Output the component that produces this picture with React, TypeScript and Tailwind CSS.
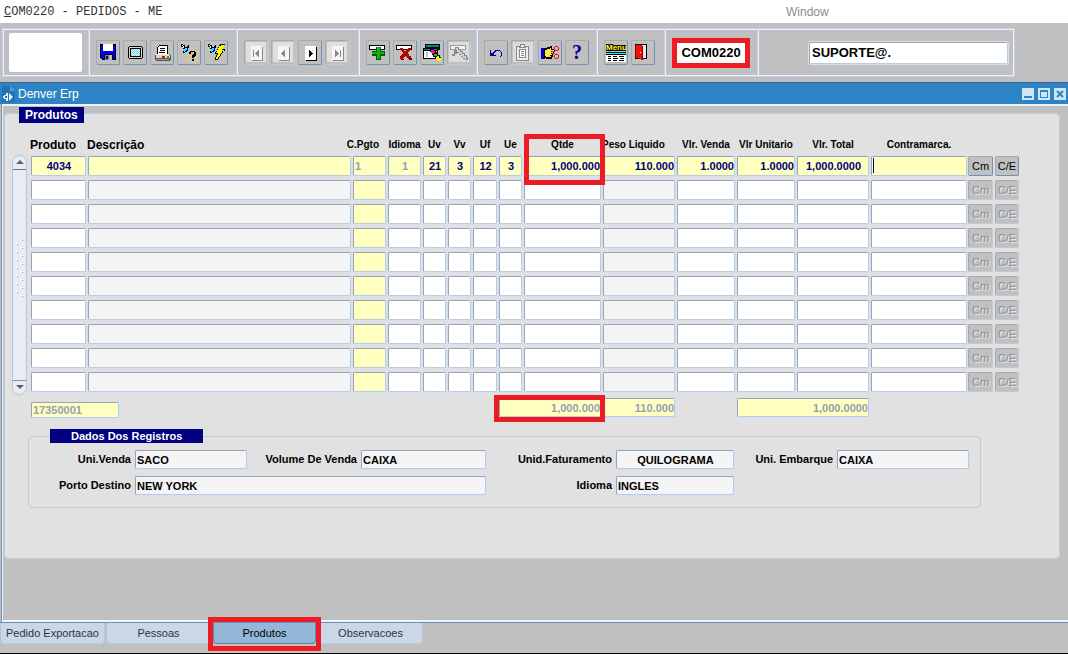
import type { ReactNode } from 'react'
import clsx from 'clsx'

const bevel = 'border border-t-[#9ea4ae] border-l-[#9ea4ae] border-r-[#b8cce4] border-b-[#b8cce4]'
const field = clsx(bevel, 'block w-full rounded-[2px] outline-none ring-1 ring-[#d6e0ee] font-bold text-[11px]')
const redFrame = 'pointer-events-none absolute z-10 border-5 border-[#ed1c24]'

type Column = {
  key: string
  label: string
  width: string
  head?: string
  align?: string
  empty?: string
  text?: string
  value?: string
}

const columns: Column[] = [
  { key: 'produto', label: 'Produto', width: 'w-[57px]', head: 'text-left text-[12px]', align: 'text-center', value: '4034' },
  { key: 'descricao', label: 'Descrição', width: '', head: 'text-left text-[12px]', empty: 'bg-[#f4f4f4]' },
  { key: 'cpgto', label: 'C.Pgto', width: 'w-[35px]', head: 'flex justify-end pr-2', empty: 'bg-[#ffffc0]', text: 'text-[#94a0b4]', value: '1' },
  { key: 'idioma', label: 'Idioma', width: 'w-[35px]', align: 'text-center', text: 'text-[#94a0b4]', value: '1' },
  { key: 'uv', label: 'Uv', width: 'w-[25px]', align: 'text-center', value: '21' },
  { key: 'vv', label: 'Vv', width: 'w-[25px]', align: 'text-center', value: '3' },
  { key: 'uf', label: 'Uf', width: 'w-[26px]', align: 'text-center', value: '12' },
  { key: 'ue', label: 'Ue', width: 'w-[25px]', align: 'text-center', value: '3' },
  { key: 'qtde', label: 'Qtde', width: 'w-[79px]', align: 'text-right', value: '1,000.000' },
  { key: 'peso', label: 'Peso Liquido', width: 'w-[74px]', head: 'text-left', align: 'text-right', empty: 'bg-[#f4f4f4]', value: '110.000' },
  { key: 'venda', label: 'Vlr. Venda', width: 'w-[60px]', align: 'text-right', value: '1.0000' },
  { key: 'unitario', label: 'Vlr Unitario', width: 'w-[60px]', align: 'text-right', value: '1.0000' },
  { key: 'total', label: 'Vlr. Total', width: 'w-[74px]', align: 'text-center', value: '1,000.0000' },
  { key: 'contramarca', label: 'Contramarca.', width: 'w-[98px]' },
]

const rows = Array.from({ length: 10 }, (_, i) => i)
const gripDots = Array.from({ length: 15 }, (_, i) => i)

function Icon({ children }: { children: ReactNode }) {
  return (
    <svg width="20" height="20" viewBox="0 0 20 20" shapeRendering="crispEdges" aria-hidden="true">
      {children}
    </svg>
  )
}

function SaveIcon() {
  return (
    <Icon>
      <path d="M2 2h16v16H4l-2-2z" fill="#000" />
      <path d="M3 3h14v14H4l-1-1z" fill="#0000f5" />
      <path d="M5 2h10v7H5z" fill="#fff" />
      <path d="M15 3h1v2h-1z" fill="#000" />
      <path d="M6 12h9v6H6z" fill="#000" />
      <path d="M7 13h7v5H7z" fill="#808080" />
      <path d="M11 13h3v5h-3z" fill="#c0c0c0" />
      <path d="M8 14h2v3H8z" fill="#0000a0" />
    </Icon>
  )
}

function ScreenIcon() {
  return (
    <Icon>
      <path d="M4 4h13v1h1v11h-1v1H4v-1H3V5h1z" fill="#000" />
      <path d="M4 5h13v11H4z" fill="#d8d4cc" />
      <path d="M5 6h11v9H5z" fill="#000" />
      <path d="M6 7h9v7H6z" fill="#fff" />
      <path
        d="M6 7.5h9M7 8.5h8M6 9.5h9M7 10.5h8M6 11.5h9M7 12.5h8M6 13.5h9"
        stroke="#5fd6dc"
        strokeDasharray="1 1"
      />
    </Icon>
  )
}

function PrintIcon() {
  return (
    <Icon>
      <path d="M7 3h9v9H5V5z" fill="#000" />
      <path d="M7 4h8v8H6V6z" fill="#fff" />
      <path d="M8 6h5v1H8zM8 8h5v1H8zM7 10h6v1H7z" fill="#000" />
      <path d="M4 12h14v1h1v5h-1v1H4v-1H3v-5h1z" fill="#555" />
      <path d="M3 12h14v1H3z" fill="#eee" />
      <path d="M4 13h14v3H4z" fill="#d8d8d8" />
      <path d="M4 17h13v1H4z" fill="#a0a0a0" />
      <path d="M10 14h3v2h-3z" fill="#f00" />
      <path d="M13 14h2v2h-2z" fill="#ff0" />
      <path d="M15 14h2v2h-2z" fill="#0b0" />
    </Icon>
  )
}

function Torch() {
  return (
    <>
      <path d="M2 2h2v1h2v2h2V4h1V3h1v3h-1v3H8v1H6v1H4V9h1V7H4V5H2z" fill="#000" />
      <path d="M3 3h1v1H3zM4 4h1v2H4z" fill="#fff" />
      <path d="M5 7h1V6h2v2H7v1H6v1H5z" fill="#0ff" />
      <path d="M8 5h1v3H8v1H7V8h1z" fill="#00f" />
      <path d="M6 9h2v1H6z" fill="#0000a0" />
    </>
  )
}

function EnterQueryIcon() {
  return (
    <Icon>
      <path
        d="M8 11.5h11M8 13.5h11M8 15.5h11M8 17.5h11M8 19.5h11M12 9.5h7"
        stroke="#f5e23c"
        strokeDasharray="1 1"
      />
      <Torch />
      <path d="M11 9h5v1h1v4h-1v1h-1v1h-2v-3h1v-1h1v-2h-3v2h-2v-2h1zM13 17h2v2h-2z" fill="#000" />
    </Icon>
  )
}

function RunQueryIcon() {
  return (
    <Icon>
      <Torch />
      <path d="M14 2h5v1h-1v2h-1v2h2v2h-2v2h-1v1h-1v2h-1v1h-1v2h-1v1H9v-3h1v-2h1v-1H9v-2h1V9h1V7h1V5h1V3h1z" fill="#000" />
      <path d="M15 3h3v2h-1v2h-1v1h2v1h-2v2h-1v1h-1v2h-1v1h-1v2h-2v-2h1v-2h1v-2h-2v-1h1V8h1V6h1V4h1z" fill="#ff0" />
    </Icon>
  )
}

function NavIcon({ glyph, active }: { glyph: string; active?: boolean }) {
  return (
    <Icon>
      {!active && <path d="M0 0h20v20H0z" fill="#e0e0e0" />}
      <path d="M6 5h11v14H6z" fill={active ? '#000' : '#888'} />
      <path d="M5 4h11v14H5z" fill={active ? '#fff' : '#f6f6f6'} />
      <path d={glyph} fill={active ? '#000' : '#888'} />
    </Icon>
  )
}

const record = (
  <>
    <path d="M1 3h16v5H1z" fill="#000" />
    <path d="M2 4h14v3H2z" fill="#fff" />
  </>
)

function InsertIcon() {
  return (
    <Icon>
      {record}
      <path d="M8 5h5v4h4v5h-4v4H8v-4H4V9h4z" fill="#006000" />
      <path d="M9 5h3v5h4v2h-4v5H9v-5H4v-2h5z" fill="#12b312" />
    </Icon>
  )
}

function RemoveIcon() {
  return (
    <Icon>
      {record}
      <path d="M5 6h3v2h1v1h2V8h1V7h1V6h3v2h-1v1h-1v1h-1v2h1v2h2v3h-3v-1h-1v-1h-1v-1h-1v1H9v1H8v1H5v-3h1v-1h1v-1h1v-2H7V9H6V8H5z" fill="#b80000" />
      <path d="M14 16h3v2h-3zM6 17h3v1H6z" fill="#600" />
    </Icon>
  )
}

function ClearIcon() {
  return (
    <Icon>
      <path d="M3 2h15v6H3z" fill="#000" />
      <path d="M4 3h13v2H4z" fill="#008b8b" />
      <path d="M1 6h15v11H1z" fill="#000" />
      <path d="M2 7h13v1H2z" fill="#008b8b" />
      <path d="M2 9h13v7H2z" fill="#fff" />
      <path d="M4 10h2v5H4z" fill="#c0c0c0" />
      <path d="M8 7h4v1h2v2h1v2h1v1h2v2h1v4h-3v-1h-2v-2h-1v-1h-2v-2h-1v-2H9v-1H8z" fill="#000" />
      <path d="M9 8h3v3H9z" fill="#f0f" />
      <path d="M12 9h1v2h-1zM10 11h2v1h-2z" fill="#f00" />
      <path d="M12 12h3v2h-3z" fill="#0c4" />
      <path d="M15 14h2v2h2v3h-3v-1h-2v-3h1z" fill="#ff0" />
    </Icon>
  )
}

function LockIcon() {
  return (
    <Icon>
      <path d="M0 0h20v20H0z" fill="#dcdcdc" />
      <path d="M1 3h16v5H1z" fill="#999" />
      <path d="M2 4h14v3H2z" fill="#f4f4f4" />
      <path d="M6 5h4v2h2v2h2v2h2v2h2v2h1v3h-3v-1h-2v-2h-2v-2h-2v-2H8v1H6v2H3v-2h2V8h1z" fill="#8a8a8a" />
      <path d="M7 6h2v2h2v2h2v2h2v2h2v2h1v1h-2v-1h-2v-2h-2v-2h-2v-2H8V8H7z" fill="#d0d0d0" />
    </Icon>
  )
}

function UndoIcon() {
  return (
    <Icon>
      <path
        d="M4 8h1v3h2v-1h1V9h1V8h5v1h1v1h1v4h-1v1h-1v-1h1v-4h-1V9h-4v1H9v1H8v2h2v1H4z"
        fill="#000090"
      />
    </Icon>
  )
}

function ClipboardIcon() {
  return (
    <Icon>
      <path d="M0 0h20v20H0z" fill="#dcdcdc" />
      <path d="M3 4h13v15H3z" fill="#888" />
      <path d="M4 5h11v13H4z" fill="#ededed" />
      <path d="M7 2h5v2h1v2H6V4h1z" fill="#888" />
      <path d="M8 3h3v2H8z" fill="#eee" />
      <path d="M6 7h7v9H6z" fill="#888" />
      <path d="M7 8h5v7H7z" fill="#fff" />
      <path d="M8 9h3v1H8zM8 11h3v1H8zM8 13h3v1H8z" fill="#888" />
    </Icon>
  )
}

function HandIcon() {
  return (
    <Icon>
      <path d="M1 6h4v11H1z" fill="#0000c8" />
      <path d="M4 7h1V6h2V5h3V4h2v3h3v3h-1v2h-1v3h-1v2H6v-1H4z" fill="#000" />
      <path d="M5 8h2V7h3V6h1v2h3v1h-3v1h2v1h-2v1h1v1h-2v1h1v1H6v-1H5z" fill="#ffe94a" />
      <path
        d="M14 5h1V4h3v1h1v3h-1v1h-3V8h-1zM15 5v3h3V5zM14 13h1v-1h3v1h1v3h-1v1h-3v-1h-1zM15 13v3h3v-3zM12 9h3v1h-3zM12 11h3v1h-3z"
        fill="#e8141c"
        fillRule="evenodd"
      />
    </Icon>
  )
}

function HelpIcon() {
  return (
    <Icon>
      <text x="10" y="17" textAnchor="middle" className="fill-[#000090] font-['Liberation_Serif',serif] text-[20px] font-bold">
        ?
      </text>
    </Icon>
  )
}

function MenuIcon() {
  return (
    <Icon>
      <text
        x="0"
        y="8"
        className="fill-[#ffff20] stroke-black stroke-2 font-['Liberation_Sans',sans-serif] text-[8px] font-bold [paint-order:stroke]"
      >
        Menu
      </text>
      <path d="M0 10h20v3H0z" fill="#000" />
      <path d="M0 11h20v1H0z" fill="#0ff" />
      <path d="M0 13h20v7H0z" fill="#fff" />
      <path d="M2 14h3v1H2zM7 14h4v1H7zM13 14h5v1h-5zM2 16h3v1H2zM7 16h5v1H7zM14 16h4v1h-4zM2 18h3v1H2zM7 18h4v1H7zM13 18h5v1h-5z" fill="#000" />
    </Icon>
  )
}

function DoorIcon() {
  return (
    <Icon>
      <path d="M2 2h12v15H2z" fill="#000" />
      <path d="M3 3h10v13H3z" fill="#c8c8c8" />
      <path d="M10 3h3v13h-3z" fill="#e8e8e8" />
      <path d="M2 3h7v1h1v14H8v-1H5v-1H2z" fill="#800" />
      <path d="M3 3h6v14H7v-1H3z" fill="#f01010" />
      <path d="M7 10h1v1H7z" fill="#fff" />
    </Icon>
  )
}

function ToolButton({ label, disabled, children }: { label: string; disabled?: boolean; children: ReactNode }) {
  return (
    <button
      type="button"
      aria-label={label}
      disabled={disabled}
      className={clsx(
        'flex h-[25px] w-6 items-start justify-center rounded-[2px] border border-t-[#a9a9a9] border-l-[#a9a9a9] pt-px',
        disabled ? 'border-r-[#b8cce4] border-b-[#b8cce4]' : 'border-r-[#7193b8] border-b-[#7193b8]',
      )}
    >
      {children}
    </button>
  )
}

function ToolGroup({ width, children }: { width: string; children: ReactNode }) {
  return (
    <div className={clsx('flex items-center gap-[3px] border-l border-[#bfd2ea] pl-[7px] shadow-[inset_1px_0_0_#eef4fb]', width)}>
      {children}
    </div>
  )
}

function Toolbar() {
  return (
    <div className="bg-[#c0c0c0] px-0.5 py-[5px]">
      <div className="flex h-[49px] w-fit border border-[#bfd2ea] shadow-[inset_0_0_0_1px_#eef4fb]">
        <div className="flex w-[85px] items-center px-1.5">
          <div className="h-[39px] w-[74px] rounded-[2px] bg-white" />
        </div>
        <ToolGroup width="w-[148px]">
          <ToolButton label="Salvar"><SaveIcon /></ToolButton>
          <ToolButton label="Tela"><ScreenIcon /></ToolButton>
          <ToolButton label="Imprimir"><PrintIcon /></ToolButton>
          <ToolButton label="Entrar consulta"><EnterQueryIcon /></ToolButton>
          <ToolButton label="Executar consulta"><RunQueryIcon /></ToolButton>
        </ToolGroup>
        <ToolGroup width="w-[122px]">
          <ToolButton label="Primeiro" disabled><NavIcon glyph="M7 8h1v7H7zM13 8v7h-1v-1h-1v-1h-1v-1H9v-1h1v-1h1V9h1V8z" /></ToolButton>
          <ToolButton label="Anterior" disabled><NavIcon glyph="M12 8v7h-1v-1h-1v-1H9v-1H8v-1h1v-1h1V9h1V8z" /></ToolButton>
          <ToolButton label="Próximo"><NavIcon active glyph="M9 8v7h1v-1h1v-1h1v-1h1v-1h-1v-1h-1V9h-1V8z" /></ToolButton>
          <ToolButton label="Último" disabled><NavIcon glyph="M13 8h1v7h-1zM8 8v7h1v-1h1v-1h1v-1h1v-1h-1v-1h-1V9H9V8z" /></ToolButton>
        </ToolGroup>
        <ToolGroup width="w-[118px]">
          <ToolButton label="Inserir registro"><InsertIcon /></ToolButton>
          <ToolButton label="Remover registro"><RemoveIcon /></ToolButton>
          <ToolButton label="Limpar registro"><ClearIcon /></ToolButton>
          <ToolButton label="Bloquear registro" disabled><LockIcon /></ToolButton>
        </ToolGroup>
        <ToolGroup width="w-[120px]">
          <ToolButton label="Desfazer"><UndoIcon /></ToolButton>
          <ToolButton label="Colar" disabled><ClipboardIcon /></ToolButton>
          <ToolButton label="Recortar"><HandIcon /></ToolButton>
          <ToolButton label="Ajuda"><HelpIcon /></ToolButton>
        </ToolGroup>
        <ToolGroup width="w-[68px]">
          <ToolButton label="Menu"><MenuIcon /></ToolButton>
          <ToolButton label="Sair"><DoorIcon /></ToolButton>
        </ToolGroup>
        <ToolGroup width="w-[93px]">
          <input
            aria-label="Programa"
            readOnly
            value="COM0220"
            className="h-[30px] w-[78px] border-5 border-[#ed1c24] bg-white text-center text-[13px] font-bold text-black outline-none"
          />
        </ToolGroup>
        <ToolGroup width="w-[257px]">
          <input
            aria-label="Usuário"
            readOnly
            value="SUPORTE@."
            className={clsx(bevel, 'ml-11 h-[22px] w-[199px] rounded-[2px] bg-white pl-0.5 text-[13px] font-bold text-black ring-1 ring-[#d6e0ee] outline-none')}
          />
        </ToolGroup>
      </div>
    </div>
  )
}

function TitleBar() {
  const control = 'flex size-3 items-center justify-center bg-[#cfe6f7]'
  return (
    <div className="flex h-[22px] items-center border-t border-[#44628f] bg-[#2d84c4] pr-0.5 pl-0.5">
      <svg width="13" height="16" viewBox="0 0 13 16" aria-hidden="true">
        <path d="M0 0h8l5 5v11H0z" fill="#1f75b4" />
        <path d="M8 0l5 5H8z" fill="#4ba0dc" />
        <path d="M4 7h2v8H4v-2H2v-1H1v-2h1V9h2z" fill="#e6f3fc" />
        <path d="M3 10h2v2H3z" fill="#1f75b4" />
        <path d="M7 7v8l4-4z" fill="#e6f3fc" />
      </svg>
      <span className="ml-[3px] text-[12px] text-white">Denver Erp</span>
      <div className="ml-auto flex gap-1">
        <button type="button" aria-label="Minimizar" className={control}>
          <svg width="12" height="12"><path d="M2 8h8v2H2z" fill="#2d84c4" /></svg>
        </button>
        <button type="button" aria-label="Maximizar" className={control}>
          <svg width="12" height="12"><path d="M2 2h8v8H2zM3 4v5h6V4z" fill="#2d84c4" fillRule="evenodd" /></svg>
        </button>
        <button type="button" aria-label="Fechar" className={control}>
          <svg width="12" height="12"><path d="M3 3l6 6M9 3l-6 6" stroke="#2d84c4" strokeWidth="2" /></svg>
        </button>
      </div>
    </div>
  )
}

function ScrollRail() {
  return (
    <div className="mt-5 flex h-60 w-[15px] shrink-0 flex-col items-center rounded-full border border-[#b8c4d4] bg-[#e8edf5]">
      <div className="flex h-[14px] w-full items-center justify-center border-b border-[#66708a]">
        <svg width="8" height="5" aria-hidden="true"><path d="M4 0l4 4H0z" fill="#5a6070" /></svg>
      </div>
      <svg width="9" height="60" className="mt-[69px]" shapeRendering="crispEdges" aria-hidden="true">
        {gripDots.map((i) => (
          <g key={i}>
            <rect x={i % 2 ? 1 : 6} y={i * 4} width="2" height="2" fill="#fff" />
            <rect x={i % 2 ? 2 : 7} y={i * 4 + 1} width="1" height="1" fill="#7f9cc0" />
          </g>
        ))}
      </svg>
      <div className="mt-auto flex h-[14px] w-full items-center justify-center border-t border-[#7c94b4]">
        <svg width="8" height="5" aria-hidden="true"><path d="M0 0h8L4 4z" fill="#5a6070" /></svg>
      </div>
    </div>
  )
}

function RowButton({ label, active }: { label: string; active: boolean }) {
  return (
    <button
      type="button"
      disabled={!active}
      className={clsx(
        'block h-5 w-full rounded-[2px] border border-t-[#a9a9a9] border-l-[#a9a9a9] bg-[#c0c0c0] text-center text-[11px]',
        active
          ? 'border-r-[#7193b8] border-b-[#7193b8] text-black'
          : 'border-r-[#b8cce4] border-b-[#b8cce4] text-[#8c8c8c] [text-shadow:1px_1px_0_#eee]',
      )}
    >
      {label}
    </button>
  )
}

function ProductTable() {
  const totalField = clsx(field, 'h-[19px] bg-[#ffffc0] pl-px text-right text-[#94a0b4]')
  return (
    <table className="w-full table-fixed border-collapse">
      <colgroup>
        {columns.map((c) => (
          <col key={c.key} className={c.width} />
        ))}
        <col className="w-[27px]" />
        <col className="w-[26px]" />
      </colgroup>
      <thead>
        <tr className="h-5">
          {columns.map((c) => (
            <th key={c.key} className="relative p-0 align-middle text-[10px] leading-4 font-bold whitespace-nowrap">
              <div className={c.head}>{c.label}</div>
              {c.key === 'qtde' && <span className={clsx(redFrame, '-top-px -right-[3px] left-px h-[51px]')} />}
            </th>
          ))}
          <td colSpan={2} />
        </tr>
      </thead>
      <tbody>
        {rows.map((r) => (
          <tr key={r}>
            {columns.map((c) => (
              <td key={c.key} className="px-px pt-px pb-[3px]">
                <input
                  aria-label={`${c.label} ${r + 1}`}
                  readOnly={c.key !== 'contramarca'}
                  defaultValue={r === 0 ? c.value : ''}
                  className={clsx(
                    field,
                    'h-5 pl-px',
                    c.align,
                    c.text ?? 'text-[#000080]',
                    r === 0 ? 'bg-[#ffffc0]' : (c.empty ?? 'bg-white'),
                    r === 0 && c.key === 'contramarca' && 'bg-[linear-gradient(#000080,#000080)] bg-[length:1px_15px] bg-[position:1px_1px] bg-no-repeat',
                  )}
                />
              </td>
            ))}
            <td className="pt-px pr-0.5 pb-[3px]">
              <RowButton label="Cm" active={r === 0} />
            </td>
            <td className="pt-px pr-0.5 pb-[3px]">
              <RowButton label="C/E" active={r === 0} />
            </td>
          </tr>
        ))}
      </tbody>
      <tfoot>
        <tr className="h-[23px]">
          <td colSpan={2} className="px-px pt-[3px] align-bottom">
            <input
              aria-label="Pedido"
              readOnly
              value="17350001"
              className={clsx(field, 'h-4 max-w-[88px] bg-[#ffffc0] pl-px text-[#94a0b4]')}
            />
          </td>
          <td colSpan={5} />
          <td colSpan={2} className="relative px-px pt-[3px] align-top">
            <input aria-label="Total Qtde" readOnly value="1,000.000" className={totalField} />
            <span className={clsx(redFrame, 'top-0 -right-[3px] -left-1 h-[27px]')} />
          </td>
          <td className="px-px pt-[3px] align-top">
            <input aria-label="Total Peso" readOnly value="110.000" className={totalField} />
          </td>
          <td />
          <td colSpan={2} className="px-px pt-[3px] align-top">
            <input aria-label="Total Geral" readOnly value="1,000.0000" className={totalField} />
          </td>
          <td colSpan={3} />
        </tr>
      </tfoot>
    </table>
  )
}

function DetailField({ id, label, value, className }: { id: string; label: string; value: string; className?: string }) {
  return (
    <>
      <label htmlFor={id} className="pr-1 text-right text-[11px] font-bold whitespace-nowrap">
        {label}
      </label>
      <input
        id={id}
        readOnly
        value={value}
        className={clsx(field, 'h-[19px] bg-[#f4f4f4] pl-px text-black', className)}
      />
    </>
  )
}

function RecordDetails() {
  return (
    <fieldset className="mt-[11px] mr-[78px] ml-[23px] rounded-[4px] border border-[#b9cde4] pr-[11px] pb-3">
      <legend className="ml-[21px] bg-[#000080] px-[21px] text-[11px] leading-[14px] font-bold text-white">
        Dados Dos Registros
      </legend>
      <div className="mt-[7px] grid grid-cols-[106px_112px_114px_125px_130px_118px_103px_1fr] items-center gap-y-[7px]">
        <DetailField id="uni-venda" label="Uni.Venda" value="SACO" />
        <DetailField id="volume" label="Volume De Venda" value="CAIXA" />
        <DetailField id="faturamento" label="Unid.Faturamento" value="QUILOGRAMA" className="text-center" />
        <DetailField id="embarque" label="Uni. Embarque" value="CAIXA" />
        <DetailField id="porto" label="Porto Destino" value="NEW YORK" className="col-span-3" />
        <DetailField id="idioma" label="Idioma" value="INGLES" />
      </div>
    </fieldset>
  )
}

function Tabs() {
  const tabs = ['Pedido Exportacao', 'Pessoas', 'Produtos', 'Observacoes']
  return (
    <nav className="flex h-[31px] gap-[3px] border-b border-black bg-[#c0c0c0] pl-px">
      {tabs.map((tab) => (
        <button
          key={tab}
          type="button"
          className={clsx(
            'relative h-[21px] w-[103px] rounded-b-[4px] border-b text-[11px] whitespace-nowrap',
            tab === 'Produtos'
              ? 'border-x border-[#5f86b0] bg-[#94b7d8] text-black'
              : 'border-[#b9cde4] bg-[#c9d7e9] text-[#333]',
          )}
        >
          {tab}
          {tab === 'Produtos' && <span className={clsx(redFrame, '-top-1.5 -right-1.5 -bottom-2 -left-1.5')} />}
        </button>
      ))}
    </nav>
  )
}

export default function App() {
  return (
    <div className="flex min-h-screen flex-col bg-[#c0c0c0] font-['Liberation_Sans',Arial,sans-serif] text-black">
      <header className="flex h-[23px] items-center bg-white pl-1">
        <span className="w-[782px] font-['Liberation_Mono',monospace] text-[12px] text-[#333]">
          <span className="underline">C</span>OM0220 - PEDIDOS - ME
        </span>
        <span className="text-[12px] text-[#8c8c8c]">Window</span>
      </header>
      <Toolbar />
      <TitleBar />
      <main className="ml-px flex flex-1 flex-col border-l border-[#6f8fb3]">
        <div className="flex-1 border-y-2 border-l border-[#eef3fa] pr-2">
          <section className="mt-[7px] ml-px rounded-[4px] border border-[#b9cde4] bg-[#e1e1e1] pb-[50px]">
            <h2 className="-mt-[7px] ml-3.5 w-fit bg-[#000080] px-1.5 text-[12px] leading-4 font-bold text-white">
              Produtos
            </h2>
            <div className="mt-3 flex gap-[3px] pr-[38px] pl-[7px]">
              <ScrollRail />
              <ProductTable />
            </div>
            <RecordDetails />
          </section>
        </div>
      </main>
      <div className="h-px bg-[#6f8fb3]" />
      <Tabs />
    </div>
  )
}
